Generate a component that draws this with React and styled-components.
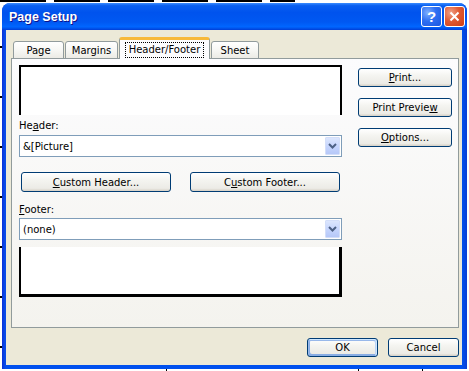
import styled, { createGlobalStyle } from "styled-components";

const GlobalStyle = createGlobalStyle`
  html, body {
    margin: 0;
    padding: 0;
  }
  body {
    width: 469px;
    height: 371px;
    overflow: hidden;
    background-color: #fff;
    background-image:
      repeating-linear-gradient(90deg, #000 0 46px, transparent 46px 54px),
      repeating-linear-gradient(180deg, transparent 0 46px, #000 46px 48px, transparent 48px 50px),
      linear-gradient(#000, #000),
      linear-gradient(#000, #000),
      linear-gradient(#000, #000);
    background-size: 295px 2px, 2px 100%, 1px 3px, 1px 3px, 1px 3px;
    background-position: 0 0, 0 0, 166px 368px, 358px 368px, 422px 368px;
    background-repeat: no-repeat;
    font-family: "DejaVu Sans", "Liberation Sans", sans-serif;
    font-size: 10px;
    color: #000;
  }
`;

const Page = styled.div`
  padding: 3px 0 0 2px;
`;

const Window = styled.div`
  width: 465px;
  height: 366px;
  box-sizing: border-box;
  display: flex;
  flex-direction: column;
  border-radius: 8px 8px 0 0;
  background: linear-gradient(90deg, #0831d9 0, #0a4be8 3px, #0050ee 6px, #0050ee calc(100% - 5px), #0a3fd4 100%);
  overflow: hidden;
`;

const TitleBar = styled.div`
  height: 27px;
  flex-shrink: 0;
  display: flex;
  align-items: center;
  padding: 0 2px 0 7px;
  background: linear-gradient(
    180deg,
    #3a8cff 0%,
    #0a5ff0 10%,
    #0053ee 35%,
    #0058f2 70%,
    #0066ff 88%,
    #0050e8 95%,
    #003dd7 100%
  );
`;

const Title = styled.div`
  flex: 1;
  color: #fff;
  font-family: "Liberation Sans", Arial, sans-serif;
  font-weight: bold;
  font-size: 12.5px;
  text-shadow: 1px 1px 0 #0f1089;
`;

const CaptionButton = styled.div`
  width: 21px;
  height: 21px;
  box-sizing: border-box;
  margin-left: 2px;
  border: 1px solid #fff;
  border-radius: 3px;
  display: flex;
  align-items: center;
  justify-content: center;
  color: #fff;
  font-family: "Liberation Sans", Arial, sans-serif;
  font-weight: bold;
  font-size: 15px;
  background: ${(p) =>
    p.$close
      ? "radial-gradient(circle at 30% 30%, #f0a187 0%, #e05a33 45%, #cc3d14 100%)"
      : "radial-gradient(circle at 30% 30%, #7fb0ff 0%, #2e6ff2 45%, #1a56e0 100%)"};
`;

const Client = styled.div`
  flex: 1;
  margin: 0 5px 4px 4px;
  background: #ece9d8;
  padding: 8px 3px 7px 5px;
  display: flex;
  flex-direction: column;
`;

const TabStrip = styled.div`
  display: flex;
  align-items: flex-end;
  gap: 1px;
  padding-left: 2px;
  height: 21px;
  position: relative;
  z-index: 1;
  margin-bottom: -1px;
`;

const Tab = styled.div`
  width: ${(p) => p.$w}px;
  height: ${(p) => (p.$active ? 22 : 18)}px;
  box-sizing: border-box;
  display: flex;
  align-items: center;
  justify-content: center;
  border: 1px solid #919b9c;
  border-bottom: ${(p) => (p.$active ? "none" : "1px solid #919b9c")};
  border-top: ${(p) => (p.$active ? "3px solid #f7b93a" : "1px solid #919b9c")};
  border-radius: 3px 3px 0 0;
  padding-top: ${(p) => (p.$active ? "0" : "1px")};
  background: ${(p) =>
    p.$active
      ? "#fcfcfe"
      : "linear-gradient(180deg, #ffffff 0%, #f7f7f4 50%, #ecebe5 100%)"};
`;

const Focus = styled.span`
  outline: 1px dotted #000;
  padding: 1px 3px 2px;
`;

const Panel = styled.div`
  height: 270px;
  box-sizing: border-box;
  border: 1px solid #919b9c;
  background: linear-gradient(180deg, #fcfcfe 0%, #f4f3ee 100%);
  padding: 6px 0 0 7px;
  display: flex;
  gap: 16px;
`;

const LeftCol = styled.div`
  width: 323px;
  display: flex;
  flex-direction: column;
`;

const Preview = styled.div`
  height: 50px;
  box-sizing: border-box;
  background: #fff;
  border-left: 2px solid #000;
  border-right: ${(p) => (p.$bottom ? 3 : 2)}px solid #000;
  border-top: ${(p) => (p.$bottom ? "none" : "2px solid #000")};
  border-bottom: ${(p) => (p.$bottom ? "3px solid #000" : "none")};
  margin-top: ${(p) => (p.$bottom ? 7 : 0)}px;
`;

const Label = styled.div`
  line-height: 13px;
  margin: ${(p) => (p.$gap ? p.$gap : "4px 0 3px")};
`;

const Combo = styled.div`
  height: 22px;
  box-sizing: border-box;
  border: 1px solid #7f9db9;
  background: #fff;
  display: flex;
  align-items: center;
  padding: 1px 1px 1px 3px;
`;

const ComboText = styled.div`
  flex: 1;
`;

const DropButton = styled.div`
  width: 15px;
  height: 18px;
  box-sizing: border-box;
  border: 1px solid #d3def9;
  border-radius: 1px;
  background: linear-gradient(180deg, #dce6fd 0%, #c3d3fd 60%, #b6c8f8 100%);
  display: flex;
  align-items: center;
  justify-content: center;
`;

const ButtonPair = styled.div`
  display: flex;
  justify-content: space-between;
  padding: 0 2px 0 2px;
  margin-top: 15px;
`;

const Button = styled.div`
  width: ${(p) => p.$w}px;
  height: ${(p) => p.$h || 19}px;
  box-sizing: border-box;
  display: flex;
  align-items: center;
  justify-content: center;
  border: 1px solid #003c74;
  border-radius: 3px;
  background: linear-gradient(180deg, #ffffff 0%, #f4f4f0 40%, #ecebe6 85%, #d6d0c5 100%);
  box-shadow: ${(p) =>
    p.$default
      ? "inset -1px 1px #cee7ff, inset 1px 2px #98b8ea, inset -2px 2px #bcd4f6, inset 1px -1px #89ade4, inset 2px -2px #89ade4"
      : "none"};
`;

const RightCol = styled.div`
  width: 94px;
  display: flex;
  flex-direction: column;
  gap: 11px;
  padding-top: 3px;
`;

const Footer = styled.div`
  display: flex;
  justify-content: flex-end;
  gap: 10px;
  margin-top: 10px;
`;

const Chevron = () => (
  <svg width="9" height="6" viewBox="0 0 9 6">
    <path d="M1 1 L4.5 4.5 L8 1" fill="none" stroke="#4d6185" strokeWidth="2" />
  </svg>
);

const CloseGlyph = () => (
  <svg width="11" height="11" viewBox="0 0 11 11">
    <path d="M1.5 1.5 L9.5 9.5 M9.5 1.5 L1.5 9.5" stroke="#fff" strokeWidth="2" />
  </svg>
);

const tabs = [
  { label: "Page", w: 51 },
  { label: "Margins", w: 53 },
  { label: "Header/Footer", w: 91, active: true },
  { label: "Sheet", w: 48 },
];

const App = () => {
  return (
    <Page>
      <GlobalStyle />
      <Window>
        <TitleBar>
          <Title>Page Setup</Title>
          <CaptionButton>?</CaptionButton>
          <CaptionButton $close>
            <CloseGlyph />
          </CaptionButton>
        </TitleBar>
        <Client>
          <TabStrip>
            {tabs.map((t) => (
              <Tab key={t.label} $w={t.w} $active={t.active}>
                {t.active ? <Focus>{t.label}</Focus> : t.label}
              </Tab>
            ))}
          </TabStrip>
          <Panel>
            <LeftCol>
              <Preview />
              <Label>
                He<u>a</u>der:
              </Label>
              <Combo>
                <ComboText>&amp;[Picture]</ComboText>
                <DropButton>
                  <Chevron />
                </DropButton>
              </Combo>
              <ButtonPair>
                <Button $w={150} $h={20}>
                  <span>
                    <u>C</u>ustom Header...
                  </span>
                </Button>
                <Button $w={150} $h={20}>
                  <span>
                    C<u>u</u>stom Footer...
                  </span>
                </Button>
              </ButtonPair>
              <Label $gap="11px 0 2px">
                <u>F</u>ooter:
              </Label>
              <Combo>
                <ComboText>(none)</ComboText>
                <DropButton>
                  <Chevron />
                </DropButton>
              </Combo>
              <Preview $bottom />
            </LeftCol>
            <RightCol>
              <Button $w={94}>
                <span>
                  <u>P</u>rint...
                </span>
              </Button>
              <Button $w={94}>
                <span>
                  Print Previe<u>w</u>
                </span>
              </Button>
              <Button $w={94}>
                <span>
                  <u>O</u>ptions...
                </span>
              </Button>
            </RightCol>
          </Panel>
          <Footer>
            <Button $w={71} $default>
              OK
            </Button>
            <Button $w={71}>Cancel</Button>
          </Footer>
        </Client>
      </Window>
    </Page>
  );
};

export default App;
